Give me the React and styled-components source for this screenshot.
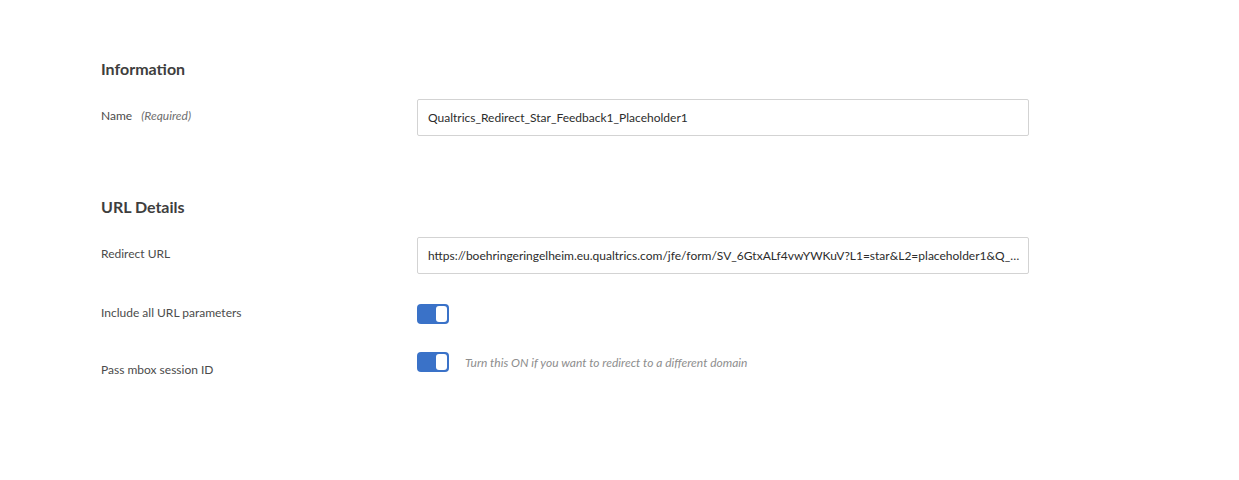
import React from 'react';
import styled, { createGlobalStyle } from 'styled-components';

const GlobalStyle = createGlobalStyle`
  body {
    margin: 0;
    background: #ffffff;
    font-family: Lato, 'Open Sans', sans-serif;
    color: #4b4b4b;
  }
`;

const Page = styled.div`
  padding: 58px 0 0 101px;
  width: 928px;
`;

const Section = styled.section`
  margin-bottom: 60px;
`;

const Heading = styled.h2`
  margin: 0 0 19px;
  font-size: 16px;
  font-weight: 700;
  color: #3e3e3e;
  line-height: 22px;
`;

const Row = styled.div`
  display: grid;
  grid-template-columns: 316px 612px;
  align-items: ${(p) => (p.$top ? 'start' : 'center')};
  min-height: ${(p) => p.$height || 37}px;
  margin-bottom: ${(p) => p.$gap || 0}px;
`;

const Label = styled.div`
  font-size: 12px;
  color: #4b4b4b;
  margin-top: ${(p) => (p.$offset || 0) - 4}px;
`;

const Required = styled.i`
  margin-left: 6px;
  color: #6e6e6e;
`;

const Input = styled.div`
  box-sizing: border-box;
  height: 37px;
  border: 1px solid #d3d3d3;
  border-radius: 2px;
  padding: 0 10px;
  display: flex;
  align-items: center;
  font-size: 12px;
  color: #2c2c2c;
  white-space: nowrap;
`;

const ToggleLine = styled.div`
  display: flex;
  align-items: center;
  gap: 16px;
`;

const Toggle = styled.div`
  box-sizing: border-box;
  width: 32px;
  height: 20px;
  border-radius: 4px;
  background: #3a72c8;
  padding: 2px;
  display: flex;
  justify-content: flex-end;
  & > div {
    width: 11px;
    height: 16px;
    background: #ffffff;
    border-radius: 3px;
  }
`;

const Hint = styled.span`
  font-size: 12px;
  font-style: italic;
  color: #8e8e8e;
`;

export default function App() {
  return (
    <>
      <GlobalStyle />
      <Page>
        <Section>
          <Heading>Information</Heading>
          <Row>
            <Label>
              Name <Required>(Required)</Required>
            </Label>
            <Input>Qualtrics_Redirect_Star_Feedback1_Placeholder1</Input>
          </Row>
        </Section>
        <Section>
          <Heading>URL Details</Heading>
          <Row $gap={30}>
            <Label>Redirect URL</Label>
            <Input>
              https://boehringeringelheim.eu.qualtrics.com/jfe/form/SV_6GtxALf4vwYWKuV?L1=star&amp;L2=placeholder1&amp;Q_…
            </Input>
          </Row>
          <Row $height={20} $gap={28}>
            <Label>Include all URL parameters</Label>
            <ToggleLine>
              <Toggle>
                <div />
              </Toggle>
            </ToggleLine>
          </Row>
          <Row $top $height={20}>
            <Label $offset={14}>Pass mbox session ID</Label>
            <ToggleLine>
              <Toggle>
                <div />
              </Toggle>
              <Hint>Turn this ON if you want to redirect to a different domain</Hint>
            </ToggleLine>
          </Row>
        </Section>
      </Page>
    </>
  );
}
